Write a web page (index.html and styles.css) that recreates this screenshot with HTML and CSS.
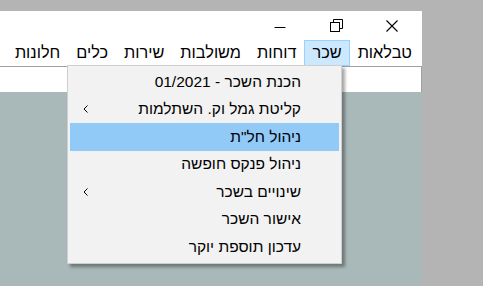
FILE: index.html
```html
<!DOCTYPE html>
<html lang="he">

<head>
  <meta charset="UTF-8">
  <title>שכר</title>
  <link rel="stylesheet" href="styles.css">
</head>

<body>
  <div class="desk">
    <div class="window">
      <div class="titlebar">
        <span class="tbtn">
          <svg width="12" height="12" viewBox="0 0 12 12"><path d="M0.5 7.5h11" stroke="#000" stroke-width="1" fill="none"/></svg>
        </span>
        <span class="tbtn">
          <svg width="13" height="13" viewBox="0 0 13 13" fill="none" stroke="#000" stroke-width="1">
            <rect x="0.5" y="3.5" width="9" height="9"/>
            <path d="M3.5 3.5v-3h9v9h-3"/>
          </svg>
        </span>
        <span class="tbtn">
          <svg width="12" height="12" viewBox="0 0 12 12"><path d="M0.5 0.5l11 11M11.5 0.5l-11 11" stroke="#000" stroke-width="1.1" fill="none"/></svg>
        </span>
      </div>

      <nav class="menubar" dir="rtl">
        <span class="mitem">טבלאות</span>
        <span class="mitem open">שכר</span>
        <span class="mitem">דוחות</span>
        <span class="mitem">משולבות</span>
        <span class="mitem">שירות</span>
        <span class="mitem">כלים</span>
        <span class="mitem">חלונות</span>
      </nav>

      <div class="toolbar"></div>
      <div class="client"></div>

      <!-- dropdown of the open menu -->
      <ul class="dropdown" dir="rtl">
        <li class="row"><span>הכנת השכר - 01/2021</span></li>
        <li class="row"><span>קליטת גמל וק. השתלמות</span><i class="sub"><svg width="5" height="8" viewBox="0 0 5 8"><path d="M4.5 0.5l-3.5 3.5l3.5 3.5" stroke="#000" fill="none"/></svg></i></li>
        <li class="row active"><span>ניהול חל"ת</span></li>
        <li class="row"><span>ניהול פנקס חופשה</span></li>
        <li class="row"><span>שינויים בשכר</span><i class="sub"><svg width="5" height="8" viewBox="0 0 5 8"><path d="M4.5 0.5l-3.5 3.5l3.5 3.5" stroke="#000" fill="none"/></svg></i></li>
        <li class="row"><span>אישור השכר</span></li>
        <li class="row"><span>עדכון תוספת יוקר</span></li>
      </ul>
    </div>
  </div>
</body>

</html>
```

FILE: styles.css
```css
body {
  margin: 0;
  background-color: #b4b4b4;
  font-family: "Liberation Sans", "DejaVu Sans", sans-serif;
  font-size: 15.5px;
  color: #000;
}

.desk {
  height: 286px;
  padding-top: 11px;
  box-sizing: border-box;
}

.window {
  position: relative;
  width: 422px;
  height: 275px;
  background-color: #fff;
  display: flex;
  flex-direction: column;
}

.titlebar {
  height: 29px;
  display: flex;
  justify-content: flex-end;
  padding-right: 2px;
}

.tbtn {
  width: 56px;
  display: flex;
  align-items: center;
  justify-content: center;
}

.menubar {
  height: 26px;
  display: flex;
  align-items: center;
  padding-right: 2px;
  font-size: 16.3px;
}

.mitem {
  padding: 2px 7px 3px 7px;
  border: 1px solid transparent;
}

.mitem.open {
  background-color: #cce8ff;
  border-color: #99d1ff;
}

.toolbar {
  height: 25px;
  border-top: 1px solid #a0a0a0;
  border-right: 1px solid #a0a0a0;
}

.client {
  flex: 1;
  background-color: #a9b8b8;
}

.dropdown {
  position: absolute;
  left: 67px;
  top: 54px;
  width: 275px;
  box-sizing: border-box;
  margin: 0;
  padding: 2px;
  list-style: none;
  background-color: #f2f2f2;
  border: 1px solid #cfcfcf;
  box-shadow: 3px 3px 3px rgba(0, 0, 0, 0.35);
}

.row {
  height: 27.5px;
  display: flex;
  align-items: center;
  padding: 0 38px 0 13px;
}

.row.active {
  background-color: #91c9f7;
}

.sub {
  margin-right: auto;
  display: flex;
}
```
